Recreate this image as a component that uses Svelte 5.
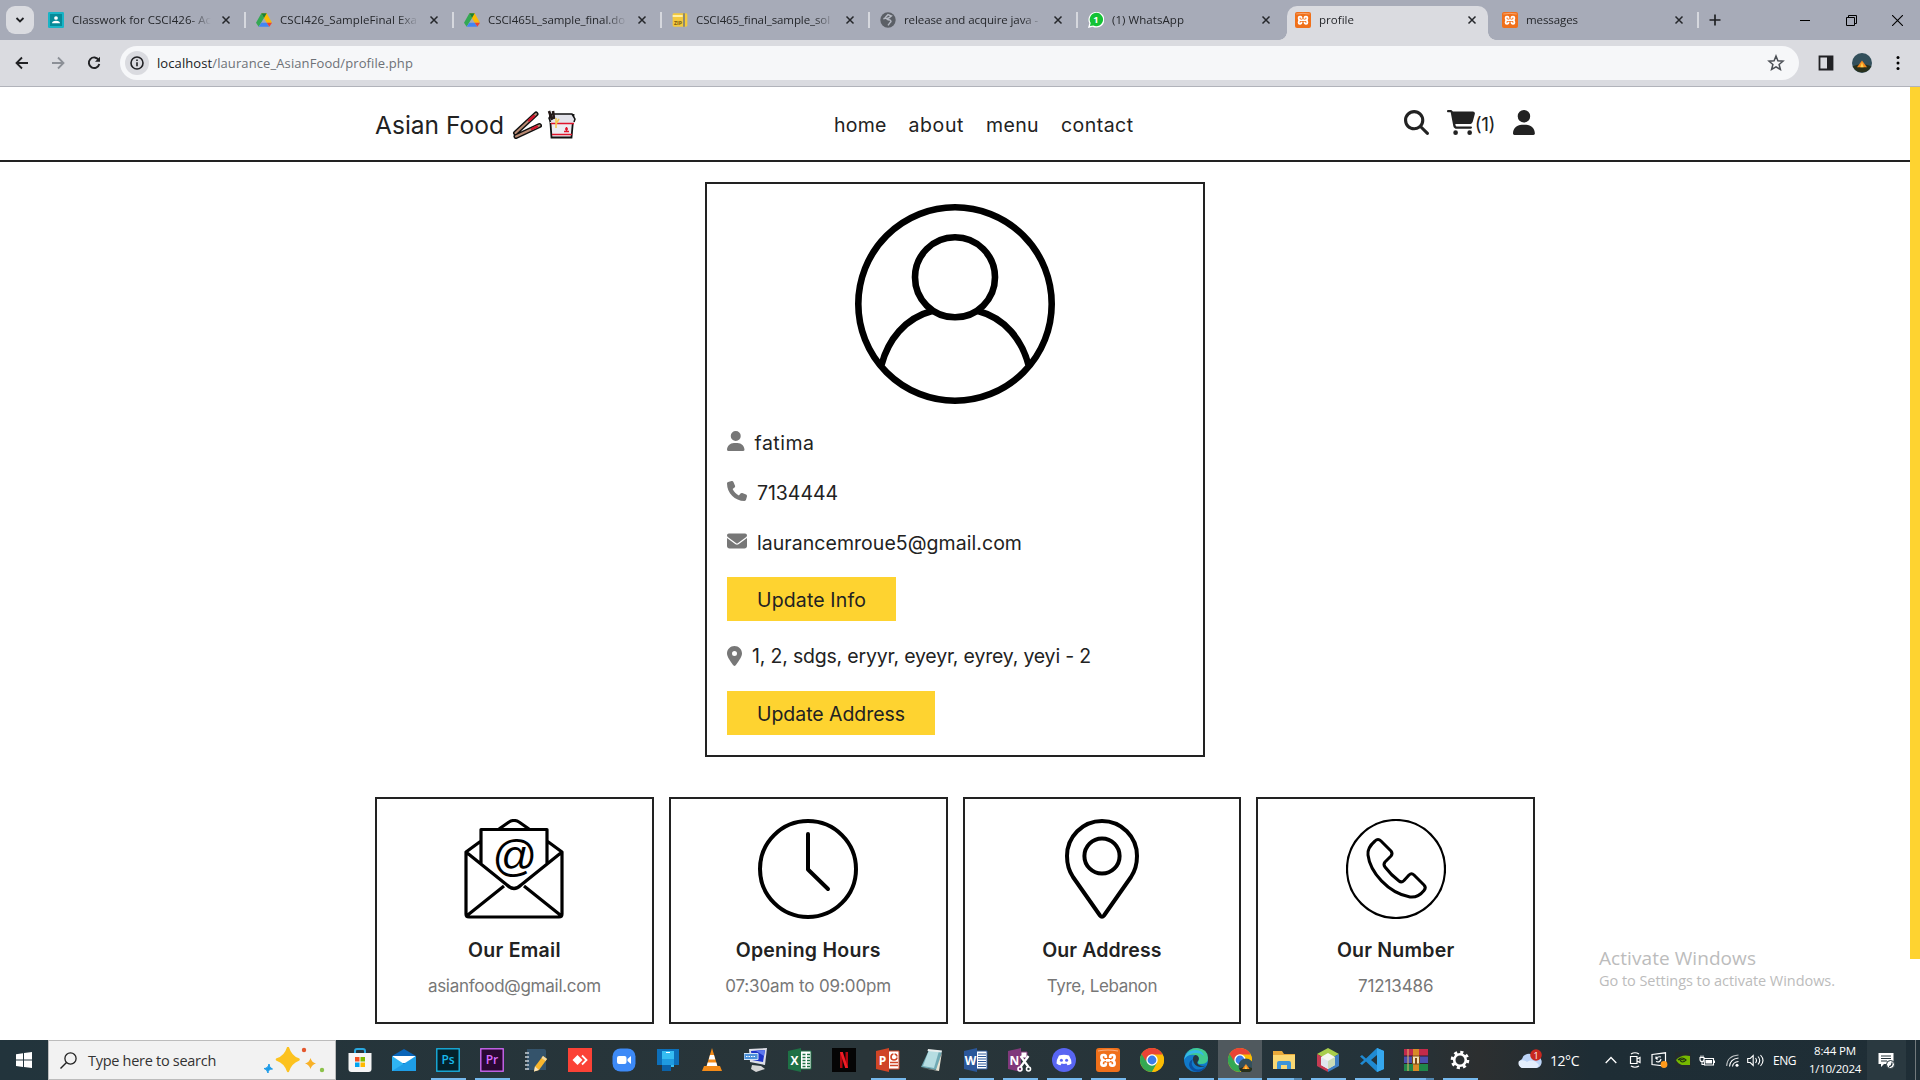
<script>
  // Spreads letters so that a label takes exactly the given width.
  function fit(node, width) {
    node.style.letterSpacing = '0px';
    const natural = node.getBoundingClientRect().width;
    const count = node.textContent.length;
    node.style.letterSpacing = `${(width - natural) / count}px`;
  }

  const fa = {
    search: ['0 0 512 512', 'M416 208c0 45.9-14.9 88.3-40 122.7L502.6 457.4c12.5 12.5 12.5 32.8 0 45.3s-32.8 12.5-45.3 0L330.7 376c-34.4 25.2-76.8 40-122.7 40C93.1 416 0 322.9 0 208S93.1 0 208 0S416 93.1 416 208zM208 352a144 144 0 1 0 0-288 144 144 0 1 0 0 288z'],
    cart: ['0 0 576 512', 'M0 24C0 10.7 10.7 0 24 0H69.5c22 0 41.5 12.8 50.6 32h411c26.3 0 45.5 25 38.6 50.4l-41 152.3c-8.5 31.4-37 53.3-69.5 53.3H170.7l5.4 28.5c2.2 11.3 12.1 19.5 23.6 19.5H488c13.3 0 24 10.7 24 24s-10.7 24-24 24H199.7c-34.6 0-64.3-24.6-70.7-58.5L77.4 54.5c-.7-3.8-4-6.5-7.9-6.5H24C10.7 48 0 37.3 0 24zM128 464a48 48 0 1 1 96 0 48 48 0 1 1 -96 0zm336-48a48 48 0 1 1 0 96 48 48 0 1 1 0-96z'],
    user: ['0 0 448 512', 'M224 256A128 128 0 1 0 224 0a128 128 0 1 0 0 256zm-45.7 48C79.8 304 0 383.8 0 482.3C0 498.7 13.3 512 29.7 512H418.3c16.4 0 29.7-13.3 29.7-29.7C448 383.8 368.2 304 269.7 304H178.3z'],
    phone: ['0 0 512 512', 'M164.9 24.6c-7.7-18.6-28-28.5-47.4-23.2l-88 24C12.1 30.2 0 46 0 64C0 311.4 200.6 512 448 512c18 0 33.8-12.1 38.6-29.5l24-88c5.3-19.4-4.6-39.7-23.2-47.4l-96-40c-16.3-6.8-35.2-2.1-46.3 11.6L304.7 368C234.3 334.7 177.3 277.7 144 207.3L193.3 167c13.7-11.2 18.4-30 11.6-46.3l-40-96z'],
    envelope: ['0 0 512 512', 'M48 64C21.5 64 0 85.5 0 112c0 15.1 7.1 29.3 19.2 38.4L236.8 313.6c11.4 8.5 27 8.5 38.4 0L492.8 150.4c12.1-9.1 19.2-23.3 19.2-38.4c0-26.5-21.5-48-48-48H48zM0 176V384c0 35.3 28.7 64 64 64H448c35.3 0 64-28.7 64-64V176L294.4 339.2c-22.8 17.1-54 17.1-76.8 0L0 176z'],
    pin: ['0 0 384 512', 'M215.7 499.2C267 435 384 279.4 384 192C384 86 298 0 192 0S0 86 0 192c0 87.4 117 243 168.3 307.2c12.3 15.3 35.1 15.3 47.4 0zM192 128a64 64 0 1 1 0 128 64 64 0 1 1 0-128z']
  };

  const xampp = '<rect x="0" y="0" width="24" height="24" rx="3" fill="#f0701a"/><path d="M2 3q10-2 20 0" stroke="#f9b183" stroke-width="1.2" fill="none"/><path d="M9.800 10V8.700Q9.800 7 8 7H7.300Q5.400 7 5.400 9 5.400 11.500 7.400 12.300 5.400 13 5.400 15.600 5.400 17.600 7.300 17.600H8Q9.800 17.600 9.800 15.900V14.500M14.200 10V8.700Q14.200 7 16 7H16.700Q18.600 7 18.600 9 18.600 11.500 16.600 12.300 18.600 13 18.600 15.600 18.600 17.600 16.700 17.600H16Q14.200 17.600 14.200 15.900V14.500M10 12.300H14" fill="none" stroke="#fff" stroke-width="2.700"/>';
  const drive = '<path d="M8 2h8l8 14h-8z" fill="#fbbc04"/><path d="M8 2l4 7-8 13-4-6z" fill="#34a853"/><path d="M8 2h8l-4 7z" fill="#188038"/><path d="M4 22l4-6h8l4 6z" fill="#4285f4"/><path d="M16 16h8l-4 6z" fill="#ea4335"/>';
  const chrome = '<circle cx="12" cy="12" r="12" fill="#fbbc04"/><path d="M12 12L1.600 6A12 12 0 0 0 12 24l5.200-9z" fill="#34a853"/><path d="M12 6.500h10.700A12 12 0 0 1 12 24l5-9z" fill="#fbbc04"/><path d="M1.600 6A12 12 0 0 1 22.600 6.500H12A5.500 5.500 0 0 0 7 9.500L6 13z" fill="#ea4335"/><circle cx="12" cy="12" r="5.700" fill="#fff"/><circle cx="12" cy="12" r="4.400" fill="#3b7de9"/>';
  const tent = '<circle cx="12" cy="12" r="12" fill="#33505c"/><path d="M1 16q11-5 22 0a12 12 0 0 1-22 0z" fill="#28301c"/><path d="M12 9l6 8H6z" fill="#f58a1f"/><path d="M12 11l2 6h-4z" fill="#ffd14a"/>';
  const officeTile = (c, l) => `<path d="M0 3L13 0v24L0 21z" fill="${c}"/><text x="6.500" y="16.500" font-size="12" font-weight="700" text-anchor="middle" fill="#fff" font-family="Open Sans, sans-serif">${l}</text>`;
  const office = (c, l, page) => `<path d="M12 3h11v18H12z" fill="#fff" stroke="${c}"/>${page}${officeTile(c, l)}`;
  const adobe = (bg, c, l) => `<rect x=".8" y=".8" width="22.400" height="22.400" fill="${bg}" stroke="${c}" stroke-width="1.300"/><text x="12" y="16" font-size="12" font-weight="600" text-anchor="middle" fill="${c}" font-family="Open Sans, sans-serif">${l}</text>`;

  const tabs = [
    { title: 'Classwork for CSCI426- Ac', w: 139, icon: '<rect width="24" height="24" rx="2" fill="#19b4c6"/><rect x="3" y="3" width="18" height="18" fill="#078a98"/><circle cx="12" cy="9" r="2.800" fill="#fff"/><path d="M6 17q0-4 6-4t6 4z" fill="#fff"/>' },
    { title: 'CSCI426_SampleFinal Exa', w: 137, icon: drive },
    { title: 'CSCI465L_sample_final.do', w: 137, icon: drive },
    { title: 'CSCI465_final_sample_sol', w: 134, icon: '<rect x="1" y="2" width="22" height="20" rx="2" fill="#f4c93c"/><path d="M1 6h15" stroke="#fff0a5" stroke-width="3"/><path d="M18 2v20" stroke="#8d8a72" stroke-width="3"/><text x="9" y="20" font-size="8" font-weight="700" text-anchor="middle" fill="#7a5a10" font-family="Open Sans, sans-serif">ZIP</text>' },
    { title: 'release and acquire java - ', w: 137, icon: '<circle cx="12" cy="12" r="11.500" fill="#5b5f66"/><path d="M5 10q3 0 4-3l3-3 5 2-4 3-3 1q2 2 5 2 3 2 0 4l-3 4" fill="none" stroke="#b5b9c3" stroke-width="2.200"/>' },
    { title: '(1) WhatsApp', w: 72, icon: '<path d="M0 24l2-7a12 11.800 0 1 1 5 5z" fill="#fff"/><path d="M3 21l1-4.500a10 10 0 1 1 4 3.700z" fill="#14c235"/><text x="12" y="17" font-size="14" font-weight="700" text-anchor="middle" fill="#fff" font-family="Open Sans, sans-serif">1</text>' },
    { title: 'profile', w: 35, icon: xampp, active: true },
    { title: 'messages', w: 52, icon: xampp }
  ];

  const nav = [['home', 52.5], ['about', 55.5], ['menu', 53], ['contact', 72.5]];

  const info = [
    { icon: 'user', text: 'fatima', w: 60 },
    { icon: 'phone', text: '7134444', w: 81 },
    { icon: 'envelope', text: 'laurancemroue5@gmail.com', w: 265 }
  ];

  const cards = [
    { title: 'Our Email', tw: 93, text: 'asianfood@gmail.com', w: 173, icon: '<g fill="none" stroke="#000" stroke-width="3.200" stroke-linejoin="round"><path d="M35 10L45 3Q50 0 55 3L65 10M17 22L2 33V95Q2 98 5 98H95Q98 98 98 95V33L83 22M17 45V10.500H83V45M2 33L43 66Q50 73 57 66L98 33M2.500 97L40 67M97.500 97L60 67"/></g><text x="50" y="52" font-size="44" font-style="italic" text-anchor="middle" font-family="Liberation Sans, sans-serif">@</text>' },
    { title: 'Opening Hours', tw: 145, text: '07:30am to 09:00pm', w: 166, icon: '<g fill="none" stroke="#000" stroke-width="4" stroke-linecap="round" stroke-linejoin="round"><circle cx="50" cy="50" r="48"/><path d="M50 15V50.500L70 70"/></g>' },
    { title: 'Our Address', tw: 119.5, text: 'Tyre, Lebanon', w: 110.5, icon: '<g fill="none" stroke="#000" stroke-width="4" stroke-linejoin="round"><path d="M50 2A35 35 0 0 0 15 37C15 45 17 52 21 58L48 96.500Q50 99 52 96.500L79 58C83 52 85 45 85 37A35 35 0 0 0 50 2z"/><circle cx="50" cy="37" r="17.600"/></g>' },
    { title: 'Our Number', tw: 117.5, text: '71213486', w: 75.5, icon: '<g fill="none" stroke="#000" stroke-linejoin="round"><circle cx="50" cy="50" r="49" stroke-width="2.200"/><path stroke-width="3" d="M29 22Q32 19 35 22L45 32Q47 34.500 45 37L39 43Q37 45.500 39 48Q45 56 53 62Q55.500 64 58 61.500L63 56Q65.500 53.500 68 56L78 66Q80.500 68.500 78 71.500Q72 79 64 78C42 74 24 53 22 36Q21 29 29 22z"/></g>' }
  ];

  const apps = [
    { i: '<path d="M7 5V3q0-2 2-2h6q2 0 2 2v2" fill="none" stroke="#29a8e0" stroke-width="2"/><path d="M.5 5h23v16q0 3-3 3h-17q-3 0-3-3z" fill="#f5f5f5"/><path d="M7 9h4.500v4.500H7z" fill="#f25022"/><path d="M12.500 9H17v4.500h-4.500z" fill="#7fba00"/><path d="M7 14.500h4.500V19H7z" fill="#00a4ef"/><path d="M12.500 14.500H17V19h-4.500z" fill="#ffb900"/>' },
    { i: '<path d="M0 8L12 1l12 7v15H0z" fill="#0a64b8"/><path d="M1 8h22v7H1z" fill="#fff"/><path d="M0 8l12 8 12-8v15H0z" fill="#2fb5f3"/><path d="M0 23l24-15v15z" fill="#1490df" opacity=".6"/>' },
    { i: adobe('#04212b', '#18b9ec', 'Ps'), run: 1 },
    { i: adobe('#2a0833', '#d96bff', 'Pr'), run: 1 },
    { i: '<path d="M3 1h17q2 0 2 2v19H3z" fill="#34536b"/><path d="M1 5h4M1 9h4M1 13h4M1 17h4M1 21h4" stroke="#c7d0d6" stroke-width="1.500"/><path d="M19 8l4 3-8 11-5 1.500 1-5z" fill="#f8b62d"/><path d="M19 8l4 3-1.500 2-4-3z" fill="#f3d9a0"/><path d="M11 18.500l4 3.500-5 1.500z" fill="#f7e5c5"/>' },
    { i: '<path d="M0 0h24v24H0z" fill="#fb4236"/><path d="M9.500 7l5 5-5 5-5-5z" fill="#fff"/><path d="M14 7.500l4.500 4.500-4.500 4.500" fill="none" stroke="#fff" stroke-width="1.800"/>' },
    { i: '<rect x=".5" y=".5" width="23" height="23" rx="8" fill="#3d8af7"/><rect x="5" y="8" width="9.500" height="8" rx="2" fill="#fff"/><path d="M15.500 11l3.500-3v8l-3.500-3z" fill="#fff"/>' },
    { i: '<path d="M1 1h22v16H1z" fill="#0d6fb9"/><path d="M6 3h12v16H6z" fill="#35bdf2"/><path d="M10 4.500h4" stroke="#fff"/><path d="M6 11h12v6H6z" fill="#1f9be0"/><path d="M6 17h9v6H6z" fill="#0b62a8"/>' },
    { i: '<path d="M4 18h16l2 5H2z" fill="#f48b18"/><path d="M12 0l6 20q-6 3-12 0z" fill="#f48b18"/><path d="M10 7h4l1.300 4.500H8.700zM7.700 14.500h8.600l1 3.500H6.700z" fill="#fff"/>' },
    { i: '<path d="M5 1l18-1-2 17-15-3z" fill="#dcdde6"/><path d="M7 3l14-1-2 12-11-2z" fill="#1d34c8"/><path d="M12 3l9-1-1 6z" fill="#5c77ec"/><path d="M0 5.500h14v6H0z" fill="#4b91da" stroke="#cfe2f6"/><path d="M2 8.500h10" stroke="#fff" stroke-dasharray="1.500 1"/><path d="M8 17l9 1 4 3-9 3-5-3z" fill="#d6d6d6"/>' },
    { i: office('#1e7145', 'X', '<path d="M14.500 6.500h3M19 6.500h3M14.500 9.500h3M19 9.500h3M14.500 12.500h3M19 12.500h3M14.500 15.500h3M19 15.500h3M14.500 18.500h3M19 18.500h3" stroke="#1e7145" stroke-width="1.500"/>') },
    { i: '<path d="M0 0h24v24H0z" fill="#050505"/><path d="M8 4h2.500v16H8zM13.500 4H16v16h-2.500z" fill="#b0060e"/><path d="M8 4h2.800L16 20h-2.800z" fill="#ee1d26"/>' },
    { i: office('#d04526', 'P', '<circle cx="18" cy="9" r="3" fill="none" stroke="#d04526" stroke-width="1.600"/><path d="M18 5v4h4" stroke="#fff" stroke-width="1.200" fill="none"/><path d="M14 14.500h8M14 17.500h8" stroke="#d04526" stroke-width="1.500"/>'), run: 1 },
    { i: '<path d="M9 2l13 1-5 19L1 19z" fill="#6fa9b4"/><path d="M9 2l10 1-5 17L3 18z" fill="#b6dde2"/><path d="M8 1l14 1.500-.5 2L7.500 3z" fill="#e9eeee"/><path d="M2 20l14 2 6-18-3 19z" fill="#e8e4d4"/>' },
    { i: office('#2b579a', 'W', '<path d="M14 6h8M14 8.500h8M14 11h8M14 13.500h8M14 16h8M14 18.500h8" stroke="#2b579a" stroke-width="1.200"/>'), run: 1 },
    { i: officeTile('#80397b', 'N') + '<path d="M13 4h6v6h-6z" fill="#fff" stroke="#80397b"/><path d="M12.500 8l8 11M20.500 8l-8 11" stroke="#fff" stroke-width="2.200"/><circle cx="12" cy="21" r="2" fill="none" stroke="#fff" stroke-width="1.600"/><circle cx="20.500" cy="21" r="2" fill="none" stroke="#fff" stroke-width="1.600"/>', run: 1 },
    { i: '<circle cx="12" cy="12" r="12" fill="#5865f2"/><path d="M7 7.500q5-1.500 10 0 2.500 4 2.500 8-2 1.500-4 1.700l-1-1.600q-2.500.6-5 0l-1 1.600q-2-.2-4-1.700 0-4 2.500-8z" fill="#fff"/><circle cx="9.400" cy="12.300" r="1.500" fill="#5865f2"/><circle cx="14.600" cy="12.300" r="1.500" fill="#5865f2"/>', run: 1 },
    { i: xampp, run: 1 },
    { i: chrome },
    { i: '<circle cx="12" cy="12" r="12" fill="#1179c9"/><path d="M1 9Q4 0 13 0q11 1 11 10 0 6-7 6-4 0-3-2 3-5-3-7-5-1-10 2z" fill="#41ca8f"/><path d="M0 12Q1 3 11 2q8 0 9 6-5-5-13-2-5 2-7 6z" fill="#35b8e8"/><path d="M9 11q-3 5 1 9 5 4 12-2-3 5-8 6-8-1-9-7 0-4 4-6z" fill="#0b4fa0"/><path d="M23 17q-4 2-8 0-3-2-1-4 1.500-2 .5-4-1-2-3-2-3 1-2.500 5 1 6 7 7 4 0 7-2z" fill="#263740"/>', run: 1 },
    { i: chrome + '<g transform="translate(10.500 10.500) scale(.62)">' + tent + '</g>', run: 1, active: true },
    { i: '<path d="M1 3h9l2 3h11v15H1z" fill="#e9a93a"/><path d="M1 7h22v14H1z" fill="#fbd873"/><path d="M5 21v-6q0-2 2-2h10q2 0 2 2v6h-4v-4H9v4z" fill="#3d94d9"/>', run: 2 },
    { i: '<path d="M12 0l11 6-11 6L1 6z" fill="#a8ce4b"/><path d="M1 6l11 6v12L1 18z" fill="#c43b52"/><path d="M23 6l-11 6v12l11-6z" fill="#3f7fc4"/><path d="M12 5l7 4v8l-7 4-7-4V9z" fill="#f4f6ef"/><path d="M5 9l7 4v8l-7-4z" fill="#dfe7ee"/><path d="M19 9l-7 4v8l7-4z" fill="#cbdcb7"/>', run: 1 },
    { i: '<path d="M17 0l7 3v18l-7 3L6 13.500 2 17l-2-1.500L4 12 0 8.500 2 7l4 3.500zM17 7l-6 5 6 5z" fill="#1f8ad2"/><path d="M17 0l7 3v18l-7 3z" fill="#35a7ee"/>', run: 1 },
    { i: '<path d="M0 1h24v7H0z" fill="#c22a4b"/><path d="M0 8h24v7H0z" fill="#4b4eae"/><path d="M0 15h24v8H0z" fill="#20864a"/><path d="M0 8h24M0 15.500h24" stroke="#2b1d2e"/><path d="M4 1v22" stroke="#e5b96b"/><path d="M9 1h6v22H9z" fill="#d88a26"/><rect x="8.500" y="8" width="7" height="8" rx="1" fill="#f3e2b6" stroke="#7c4a16"/><path d="M12 10v6" stroke="#7c4a16" stroke-width="2"/>', run: 2 },
    { i: '<circle cx="12" cy="12" r="5.800" fill="none" stroke="#fff" stroke-width="2.600"/><circle cx="12" cy="12" r="7.800" fill="none" stroke="#fff" stroke-width="3" stroke-dasharray="3.063 3.063"/>', run: 1 }
  ];
</script>

{#snippet glyph(name, height)}
  <svg class="fa" viewBox={fa[name][0]} {height}><path d={fa[name][1]} /></svg>
{/snippet}

<div class="screen">
  <div class="strip">
    <div class="tabmenu"><svg width="10" height="8" viewBox="0 0 10 8"><path d="M1.500 2l3.500 3.500L8.500 2" fill="none" stroke="#202124" stroke-width="1.800" /></svg></div>
    {#each tabs as tab, n}
      <div class="tab" class:active={tab.active} class:last={n === 7} class:bare={n === 5}>
        <svg class="fav" viewBox="0 0 24 24">{@html tab.icon}</svg>
        <div class="title"><span use:fit={tab.w}>{tab.title}</span></div>
        <svg class="x" width="10" height="10" viewBox="0 0 10 10"><path d="M1.500 1.500l7 7M8.500 1.500l-7 7" stroke="#25272b" stroke-width="1.500" /></svg>
      </div>
    {/each}
    <svg class="plus" width="12" height="12" viewBox="0 0 12 12"><path d="M6 .5v11M.5 6h11" stroke="#202124" stroke-width="1.700" /></svg>
    <div class="winbtns">
      <svg width="11" height="11" viewBox="0 0 11 11"><path d="M0 5.500h10" stroke="#000" /></svg>
      <svg width="11" height="11" viewBox="0 0 11 11"><path d="M.5 2.500h8v8h-8zM2.500 2.500v-2h8v8h-2" fill="none" stroke="#000" /></svg>
      <svg width="11" height="11" viewBox="0 0 11 11"><path d="M0 0l11 11M11 0L0 11" stroke="#000" stroke-width="1.100" /></svg>
    </div>
  </div>

  <div class="toolbar">
    <div class="tools">
      <svg width="14" height="14" viewBox="0 0 14 14"><path d="M13 7H2M7 1.500L1.500 7 7 12.500" fill="none" stroke="#202124" stroke-width="1.800" /></svg>
      <svg width="14" height="14" viewBox="0 0 14 14"><path d="M1 7h11M7 1.500L12.500 7 7 12.500" fill="none" stroke="#8c9097" stroke-width="1.800" /></svg>
      <svg width="14" height="14" viewBox="0 0 14 14"><path d="M11.700 4A5.300 5.300 0 1 0 12.300 8" fill="none" stroke="#202124" stroke-width="1.900" /><path d="M13 .8v5H8z" fill="#202124" /></svg>
    </div>
    <div class="omnibox">
      <div class="site"><svg width="14" height="14" viewBox="0 0 14 14"><circle cx="7" cy="7" r="6" fill="none" stroke="#202124" stroke-width="1.600" /><path d="M7 6.300v4M7 3.500v1.600" stroke="#202124" stroke-width="1.600" /></svg></div>
      <div class="url"><span use:fit={256}><b>localhost</b>/laurance_AsianFood/profile.php</span></div>
      <svg class="star" width="18" height="18" viewBox="0 0 18 18"><path d="M9 2l1.900 4.800 5.100.4-3.900 3.300 1.300 5L9 12.800l-4.400 2.700 1.300-5L2 7.200l5.100-.4z" fill="none" stroke="#4b4f55" stroke-width="1.500" /></svg>
    </div>
    <svg class="panel" width="16" height="16" viewBox="0 0 16 16"><path d="M1.500 1.500h13v13h-13z" fill="none" stroke="#202124" stroke-width="1.800" /><path d="M9 1h6v14H9z" fill="#202124" /></svg>
    <svg class="me" width="20" height="20" viewBox="0 0 24 24">{@html tent}</svg>
    <svg width="4" height="16" viewBox="0 0 4 16"><circle cx="2" cy="2.500" r="1.500" /><circle cx="2" cy="8" r="1.500" /><circle cx="2" cy="13.500" r="1.500" /></svg>
  </div>

  <div class="viewport">
    <div class="page">
      <header>
        <div class="bar">
          <div class="logo">
            <span use:fit={129}>Asian Food</span>
            <svg width="30" height="28" viewBox="0 0 30 28">
              <g stroke-linecap="round"><path d="M3.500 22L24 3M4 25.500L27.500 14.500" stroke="#111" stroke-width="5" /><path d="M3.500 22L24 3M4 25.500L27.500 14.500" stroke="#b98a73" stroke-width="2" /><path d="M17 9.500l5-4.500M20 18l5-2.300" stroke="#d3142c" stroke-width="2.400" /></g>
            </svg>
            <svg width="29" height="29" viewBox="0 0 29 29">
              <path d="M3 6L26.500 5l-2 22.500h-20z" fill="#ececf2" stroke="#111" stroke-width="1.800" /><path d="M2 8l3-4h20l3 5-1 4H3z" fill="#e3e3ea" /><path d="M3.500 12L2 8l3-4h20l3 5-1 3" fill="none" stroke="#111" stroke-width="1.500" />
              <path d="M2 1l3 9M6 1l1 8" stroke="#251a18" stroke-width="2.600" /><path d="M4 13.500h23M5 24.500h20" stroke="#e0142c" stroke-width="1.500" /><path d="M9 8v10M12 9l-3 5" stroke="#f3c74d" stroke-width="1.500" /><path d="M17 21.500h5M19.500 17v5M18 19h3" stroke="#e0142c" stroke-width="1.500" />
            </svg>
          </div>
          <nav>{#each nav as [label, w]}<a href="#{label}"><span use:fit={w}>{label}</span></a>{/each}</nav>
          <div class="actions">{@render glyph('search', 25)}<div class="cart">{@render glyph('cart', 25)}<span use:fit={20.5}>(1)</span></div>{@render glyph('user', 25)}</div>
        </div>
      </header>

      <section class="profile">
        <svg class="avatar" viewBox="0 0 200 200"><g fill="none" stroke="#000" stroke-width="6.600"><circle cx="100" cy="100" r="96.700" /><circle cx="100" cy="73.300" r="40" /><path d="M26.500 161C33 136 50 114 77 107M173.500 161C167 136 150 114 123 107" /></g></svg>
        {#each info as row}
          <p>{@render glyph(row.icon, 20)}<span use:fit={row.w}>{row.text}</span></p>
        {/each}
        <button><span use:fit={109}>Update Info</span></button>
        <p class="addr">{@render glyph('pin', 20)}<span use:fit={339}>1, 2, sdgs, eryyr, eyeyr, eyrey, yeyi - 2</span></p>
        <button><span use:fit={148}>Update Address</span></button>
      </section>

      <footer>
        {#each cards as card}
          <article>
            <svg viewBox="0 0 100 100">{@html card.icon}</svg>
            <h3><span use:fit={card.tw}>{card.title}</span></h3>
            <div class="sub"><span use:fit={card.w}>{card.text}</span></div>
          </article>
        {/each}
      </footer>
    </div>
    <div class="thumb"></div>
    <div class="watermark">
      <div class="big"><span use:fit={157}>Activate Windows</span></div>
      <div><span use:fit={236}>Go to Settings to activate Windows.</span></div>
    </div>
  </div>

  <div class="taskbar">
    <div class="start"><svg width="16" height="16" viewBox="0 0 16 16"><path d="M0 2.200l7-1v6.400H0zM8 1.100L16 0v7.600H8zM0 8.500h7v6.400l-7-1zM8 8.500h8V16l-8-1.100z" fill="#fff" /></svg></div>
    <div class="search">
      <svg width="17" height="17" viewBox="0 0 17 17"><circle cx="10.500" cy="6.500" r="5.600" fill="none" stroke="#222" stroke-width="1.300" /><path d="M6.500 10.500l-6 6" stroke="#222" stroke-width="1.400" /></svg>
      <span use:fit={128}>Type here to search</span>
      <svg class="stars" width="62" height="26" viewBox="0 0 62 26"><path d="M24 1q2.500 8.500 10.500 11.500-8 3-10.500 11.500Q21.500 15.500 13 12.500 21.500 9.500 24 1z" fill="#fcc21f" stroke="#fcc21f" stroke-width="2.500" stroke-linejoin="round" /><path d="M46.500 11q1.300 4.500 5.500 5.500-4.200 1.300-5.500 5.500-1.300-4.200-5.500-5.500 4.200-1 5.500-5.500z" fill="#f8b128" /><path d="M5 17q0 4 3.500 5Q4 22 4 26q-1-4-4-4.500Q4 21.500 5 17z" fill="#1c9be8" stroke="#1c9be8" /><circle cx="40" cy="3" r="2.200" fill="#e4572e" /><circle cx="58" cy="23" r="2.200" fill="#8cc24a" /></svg>
    </div>
    <div class="apps">
      {#each apps as app}
        <div class="app" class:run={app.run} class:multi={app.run === 2} class:on={app.active}><svg viewBox="0 0 24 24">{@html app.i}</svg></div>
      {/each}
    </div>
    <div class="tray">
      <svg class="cloud" width="26" height="22" viewBox="0 0 26 22"><path d="M5 19a5 5 0 0 1 0-9 7 7 0 0 1 12-3 6 6 0 0 1 3 12z" fill="#bcd4f7" /><path d="M5 19a5 5 0 0 1-3-7q4-2 8 1 6-4 12 3-1 3-3 3z" fill="#e4eefc" /><circle cx="19" cy="6" r="5.800" fill="#c8281f" /><text x="19" y="9.500" font-size="9" fill="#fff" text-anchor="middle" font-family="Open Sans, sans-serif">1</text></svg>
      <span class="temp"><span use:fit={29}>12°C</span></span>
      <svg class="chev" width="12" height="8" viewBox="0 0 12 8"><path d="M.7 7L6 1.500 11.300 7" fill="none" stroke="#fff" stroke-width="1.300" /></svg>
      <svg class="meet" width="12" height="16" viewBox="0 0 12 16"><path d="M2 2q4-2.500 8 0M2 14q4 2.500 8 0M1.500 4.500H8v7H1.500zM8 7l3-1.500v5L8 9" fill="none" stroke="#fff" stroke-width="1.200" /></svg>
      <svg class="upd" width="17" height="16" viewBox="0 0 17 16"><path d="M1 2.500L14.500.8V14L1 12.500z" fill="none" stroke="#fff" stroke-width="1.200" /><path d="M5 7q1-3 5-2M5 7V4.500M5 7h2M10 7q-1 4-5 2.500" fill="none" stroke="#fff" stroke-width="1.200" /><circle cx="13" cy="12.500" r="3.400" fill="#ff9a1a" /></svg>
      <svg class="nv" width="16" height="16" viewBox="0 0 16 16"><rect width="16" height="16" rx="1.500" fill="#232b2f" /><path d="M1 8q5-6 14-4v9H7Q3 12 1 8z" fill="#76b900" /><path d="M3 8q4-4 8 0-4 4-6 0 2-1 4 0" fill="none" stroke="#203010" stroke-width="1.100" /></svg>
      <svg class="bat" width="16" height="13" viewBox="0 0 16 13"><path d="M5 4.500h9.500v6.500h-9zM15.500 6.500v2.500M1 3.500h4v2q0 2-2 2t-2-2zM2 3.500v-2M4 3.500v-2M3 7.500v3h3" fill="none" stroke="#fff" stroke-width="1.100" /><path d="M6.500 6H13v3.500H6.500z" fill="#fff" /></svg>
      <svg class="wifi" width="13" height="13" viewBox="0 0 13 13"><g fill="none" stroke="#fff" stroke-width="1.100"><path d="M.7 12Q1 2 12.500 1" opacity=".7" /><path d="M3.500 12.500Q4 5 12.500 4M6.500 12.500Q7 8 12.500 7.500" /></g><circle cx="11" cy="11.300" r="1.500" fill="#fff" /></svg>
      <svg class="vol" width="17" height="13" viewBox="0 0 17 13"><path d="M.7 4.500h2.500l3-3v10l-3-3H.7zM8.500 4q2 2.500 0 5M11 2.500q3.500 4 0 8M13.500 1q5 5.500 0 11" fill="none" stroke="#fff" stroke-width="1.100" /></svg>
      <span class="eng"><span use:fit={23}>ENG</span></span>
      <div class="clock"><div><span use:fit={42}>8:44 PM</span></div><div><span use:fit={52}>1/10/2024</span></div></div>
      <div class="notif"><svg width="17" height="17" viewBox="0 0 17 17"><path d="M.5 1h15v11H6l-3 3v-3H.5z" fill="#fff" /><path d="M3 4h10M3 6.500h10M3 9h6" stroke="#25343b" stroke-width="1.200" /><circle cx="12.500" cy="12.500" r="4" fill="#fff" stroke="#25343b" /><path d="M11 14.500q3 0 3-4" fill="none" stroke="#25343b" stroke-width="1.300" /></svg></div>
      <div class="peek"></div>
    </div>
  </div>
</div>

<style>
  :global(body) { margin: 0; background: #fff; overflow: hidden; }
  * { box-sizing: border-box; }
  svg { display: block; flex: none; }
  .screen { width: 1920px; height: 1080px; display: flex; flex-direction: column; font-family: "Open Sans", "Noto Sans", sans-serif; overflow: hidden; }
  .screen span { display: inline-block; white-space: pre; }

  .strip { height: 40px; background: #a7abb8; display: flex; align-items: flex-start; }
  .tabmenu { width: 28px; height: 28px; margin: 6px 6px 0; border-radius: 9px; background: #dadbe0; display: grid; place-items: center; }
  .tab { width: 208px; height: 28px; margin-top: 6px; padding-left: 8px; display: flex; align-items: center; position: relative; }
  .tab::after { content: ""; position: absolute; right: 2px; top: 6px; width: 2px; height: 16px; background: #d6d8de; }
  .tab.active::after, .tab.bare::after { display: none; }
  .tab.bare { width: 207px; }
  .fav { width: 16px; height: 16px; }
  .title { width: 139px; margin-left: 8px; overflow: hidden; font-size: 11.500px; line-height: 26px; height: 28px; padding-top: 1px; color: #25272b; -webkit-mask-image: linear-gradient(90deg, #000 85%, transparent); mask-image: linear-gradient(90deg, #000 85%, transparent); }
  .x { margin-left: 10px; }
  .tab.active { width: 201px; height: 34px; background: #dadbe0; border-radius: 10px 10px 0 0; padding-bottom: 6px; }
  .tab.active::before { content: ""; position: absolute; left: -8px; right: -8px; bottom: 0; height: 8px; background: radial-gradient(circle at 0 0, transparent 7.500px, #dadbe0 8px) left / 8px 8px no-repeat, radial-gradient(circle at 100% 0, transparent 7.500px, #dadbe0 8px) right / 8px 8px no-repeat; }
  .tab.active .x { margin-left: 8px; }
  .tab.active .title { width: 140px; }
  .tab.last { width: 213px; padding-left: 14px; }
  .tab.last .x { margin-left: 10px; }
  .tab.last .title { width: 138px; }
  .plus { margin: 14px 0 0 8px; }
  .winbtns { margin-left: auto; display: flex; gap: 35px; padding: 15px 17px 0 0; }

  .toolbar { height: 47px; background: #dadbe0; border-bottom: 1px solid #b1b3ba; display: flex; align-items: center; padding: 0 20px 0 15px; }
  .tools { display: flex; gap: 22px; width: 105px; }
  .omnibox { width: 1680px; height: 34px; border-radius: 17px; background: #f6f7f9; display: flex; align-items: center; padding-left: 6px; }
  .site { width: 24px; height: 24px; border-radius: 50%; background: #dadbe0; display: grid; place-items: center; margin-left: -1px; }
  .url { margin-left: 8px; font-size: 13px; line-height: 34px; color: #6d7177; }
  .url b { font-weight: 400; color: #202124; }
  .star { margin-left: auto; margin-right: 14px; }
  .panel { margin-left: 19px; }
  .me { margin-left: 18px; margin-right: 24px; }

  .viewport { height: 953px; position: relative; display: flex; background: #fff; font-family: Inter, Roboto, sans-serif; color: #222; }
  .page { width: 1910px; }
  .thumb { width: 10px; height: 872px; background: #fed330; }
  header { height: 75px; border-bottom: 2px solid #222; padding-left: 375px; }
  .bar { display: grid; grid-template-columns: 459px 570px 1fr; height: 73px; }
  .logo { display: flex; padding-top: 23px; font-size: 24.500px; line-height: 31px; }
  .logo svg { margin-left: 8px; margin-top: 1px; }
  .logo svg + svg { margin-left: 5px; margin-top: 0; }
  nav { display: flex; gap: 22px; padding-top: 23px; font-size: 19.500px; line-height: 30px; }
  nav a { color: #222; text-decoration: none; }
  .fa { fill: currentColor; }
  .actions { display: flex; gap: 17.500px; padding-top: 23px; }
  .cart { display: flex; font-size: 19px; line-height: 30px; }

  .profile { width: 500px; height: 575px; margin: 20px 0 0 705px; border: 2px solid #222; padding: 20px; font-size: 19.500px; line-height: 30px; }
  .avatar { width: 200px; height: 200px; margin: 0 auto 13px; }
  .profile p { display: flex; gap: 10px; margin: 0; height: 50px; padding-top: 11px; line-height: 30px; }
  .profile p .fa { color: #777; margin-top: 3px; }
  .profile p.addr { height: 70px; padding-top: 21px; line-height: 29px; }
  .profile p.addr .fa { margin-top: 4px; }
  button { display: block; border: 0; background: #fed330; color: #222; font: 19.500px/24px Inter, Roboto, sans-serif; padding: 11px 30px 9px; height: 44px; }
  p + button { margin-top: 10px; }
  p.addr + button { margin-top: 0; }

  footer { display: grid; grid-template-columns: repeat(4, 1fr); gap: 15px; width: 1160px; margin: 40px 0 0 375px; }
  article { height: 227px; border: 2px solid #222; padding-top: 20px; text-align: center; }
  article svg { width: 100px; height: 100px; margin: 0 auto; }
  h3 { margin: 16px 0 0; font-size: 19.500px; font-weight: 600; line-height: 30px; }
  .sub { margin-top: 8px; font-size: 17px; line-height: 27px; color: #777; }

  .watermark { position: absolute; left: 1599px; top: 857px; font-family: "Open Sans", sans-serif; color: #bcbcbc; font-size: 14.500px; line-height: 18px; }
  .watermark .big { font-size: 19px; line-height: 28px; }

  .taskbar { height: 40px; background: linear-gradient(90deg, #22343c, #293539 45%, #24333a 72%, #2c2f30 77%, #1e2d35 83%, #1f2e36); display: flex; color: #fff; }
  .start { width: 48px; display: grid; place-items: center; }
  .search { width: 288px; background: #f2f2f2; border: 1px solid #bcbcbc; color: #333; display: flex; align-items: center; padding-left: 11px; font-size: 14.500px; }
  .search span { margin-left: 11px; }
  .stars { margin-left: 48px; }
  .apps { display: flex; margin-left: 2px; }
  .app { width: 44px; height: 40px; display: grid; place-items: center; position: relative; }
  .app svg { width: 24px; height: 24px; }
  .run::after { content: ""; position: absolute; bottom: 0; left: 5px; width: 35px; height: 2px; background: #76b9ed; }
  .multi::after { background: linear-gradient(90deg, #76b9ed 27px, #5187b1 27px); }
  .on { background: #50595e; }
  .on::after { left: 0; width: 44px; }
  .tray { display: flex; align-items: center; margin-left: 35px; flex: 1; }
  .temp { width: 29px; margin-left: 7px; font-size: 14px; }
  .chev { margin-left: 26px; }
  .meet { margin-left: 12px; }
  .upd { margin-left: 10px; }
  .nv { margin-left: 7px; }
  .bat { margin-left: 8px; }
  .wifi { margin-left: 11px; }
  .vol { margin-left: 8px; }
  .eng { width: 23px; margin-left: 9px; font-size: 12px; }
  .clock { width: 52px; margin-left: 13px; font-size: 11.500px; line-height: 18px; text-align: center; }
  .notif { width: 39px; height: 40px; margin-left: 6px; background: #2a3940; display: grid; place-items: center; }
  .peek { height: 40px; border-left: 1px solid #72797c; margin-left: 9px; }
</style>
